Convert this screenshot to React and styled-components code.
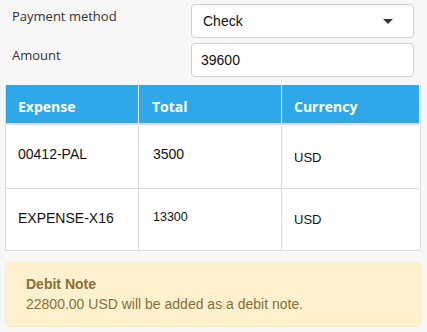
import React from "react";
import styled, { createGlobalStyle } from "styled-components";

const Global = createGlobalStyle`
  html, body { margin: 0; padding: 0; background: #f7f7f7; }
  body { font-family: "Liberation Sans", Arial, sans-serif; color: #222; }
`;

const Page = styled.div`
  padding: 4px 6px 0 5px;
  width: 416px;
`;

const Form = styled.div`
  display: grid;
  grid-template-columns: 186px 223px;
  row-gap: 5px;
`;

const Label = styled.div`
  font-family: "Open Sans", "Noto Sans", sans-serif;
  font-size: 13px;
  line-height: 18px;
  color: #333;
  padding: 3px 0 0 7px;
`;

const Field = styled.div`
  box-sizing: border-box;
  height: 34px;
  border: 1px solid #d0d0d0;
  border-radius: 4px;
  background: #fff;
  display: flex;
  align-items: center;
  justify-content: space-between;
  padding: 0 20px 0 ${(p) => p.$pad}px;
  font-size: 14px;
  color: #111;
`;

const Caret = styled.span`
  width: 0;
  height: 0;
  border-left: 5px solid transparent;
  border-right: 5px solid transparent;
  border-top: 5px solid #333;
`;

const Table = styled.div`
  margin-top: 8px;
  border: 1px solid #dcdcdc;
  border-top: none;
  background: #fff;
  display: grid;
  grid-template-columns: 132px 143px 138px;
`;

const Head = styled.div`
  background: #2ea8e8;
  color: #fff;
  font-family: "Open Sans", "Noto Sans", sans-serif;
  font-weight: 700;
  font-size: 14px;
  line-height: 20px;
  height: 40px;
  box-sizing: border-box;
  padding: 12px 0 0 ${(p) => p.$pad}px;
  border-left: ${(p) => (p.$first ? "none" : "1px solid #e6e6e6")};
  border-bottom: 2px solid #dcdcdc;
`;

const Cell = styled.div`
  height: ${(p) => p.$h}px;
  box-sizing: border-box;
  display: flex;
  align-items: center;
  padding-left: ${(p) => p.$pad}px;
  padding-top: ${(p) => Math.max(0, p.$shift * 2)}px;
  padding-bottom: ${(p) => Math.max(0, -p.$shift * 2)}px;
  font-size: ${(p) => p.$size}px;
  color: #111;
  border-left: ${(p) => (p.$first ? "none" : "1px solid #dcdcdc")};
  border-top: ${(p) => (p.$top ? "1px solid #dcdcdc" : "none")};
`;

const Note = styled.div`
  margin-top: 11px;
  width: 416px;
  box-sizing: border-box;
  background: #fdf2cd;
  border: 1px solid #fbecc4;
  border-radius: 4px;
  padding: 11px 20px 12px 20px;
  color: #8a6d3b;
  font-size: 14px;
  line-height: 20px;
`;

const NoteTitle = styled.div`
  font-weight: 700;
`;

const rows = [
  { expense: "00412-PAL", total: "3500", tSize: 14, tShift: -3, eShift: -3, uShift: 1, h: 63 },
  { expense: "EXPENSE-X16", total: "13300", tSize: 12.5, tShift: -3, eShift: -2, uShift: 0, h: 62 },
];

export default function App() {
  return (
    <Page>
      <Global />
      <Form>
        <Label>Payment method</Label>
        <Field $pad={11}>
          <span>Check</span>
          <Caret />
        </Field>
        <Label>Amount</Label>
        <Field $pad={9}>
          <span>39600</span>
        </Field>
      </Form>
      <Table>
        <Head $first $pad={12}>Expense</Head>
        <Head $pad={13}>Total</Head>
        <Head $pad={12}>Currency</Head>
        {rows.map((r, i) => (
          <React.Fragment key={r.expense}>
            <Cell $first $top={i > 0} $h={r.h} $pad={12} $size={14} $shift={r.eShift}>
              {r.expense}
            </Cell>
            <Cell $top={i > 0} $h={r.h} $pad={14} $size={r.tSize} $shift={r.tShift}>
              {r.total}
            </Cell>
            <Cell $top={i > 0} $h={r.h} $pad={12} $size={13} $shift={r.uShift}>
              USD
            </Cell>
          </React.Fragment>
        ))}
      </Table>
      <Note>
        <NoteTitle>Debit Note</NoteTitle>
        <div>22800.00 USD will be added as a debit note.</div>
      </Note>
    </Page>
  );
}
